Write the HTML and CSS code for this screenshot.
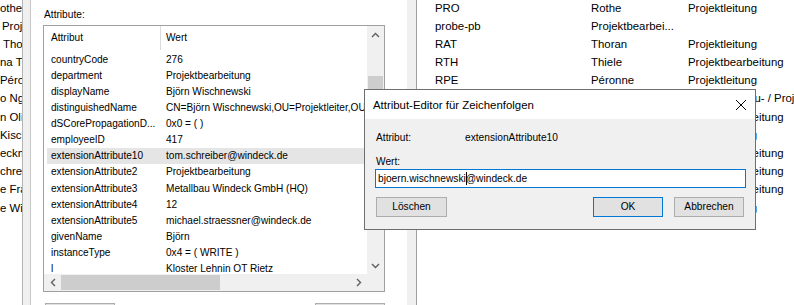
FILE: index.html
```html
<!DOCTYPE html>
<html lang="de">
<head>
<meta charset="utf-8">
<title>Attribut-Editor</title>
<link rel="stylesheet" href="styles.css">
</head>
<body>
<div class="app">
  <div class="leftlist">
    <div class="lwrap">
      <div class="lrow">othe</div>
      <div class="lrow ind2">Proje</div>
      <div class="lrow ind3">Thor</div>
      <div class="lrow">na Th</div>
      <div class="lrow">Péron</div>
      <div class="lrow">o Nga</div>
      <div class="lrow">n Oli</div>
      <div class="lrow">Kisch</div>
      <div class="lrow">eckm</div>
      <div class="lrow">chrei</div>
      <div class="lrow">e Fra</div>
      <div class="lrow">e Wi</div>
    </div>
  </div>
  <div class="split1"></div>
  <div class="middle">
    <div class="label">Attribute:</div>
    <div class="listbox">
      <div class="lv">
        <div class="lvhead">
          <div class="hc1">Attribut</div>
          <div class="hc2">Wert</div>
        </div>
        <div class="lvrows">
          <div class="lvrow"><div class="c1">countryCode</div><div class="c2">276</div></div>
          <div class="lvrow"><div class="c1">department</div><div class="c2">Projektbearbeitung</div></div>
          <div class="lvrow"><div class="c1">displayName</div><div class="c2">Björn Wischnewski</div></div>
          <div class="lvrow"><div class="c1">distinguishedName</div><div class="c2">CN=Björn Wischnewski,OU=Projektleiter,OU=Mitarbeiter</div></div>
          <div class="lvrow"><div class="c1">dSCorePropagationD...</div><div class="c2">0x0 = ( )</div></div>
          <div class="lvrow"><div class="c1">employeeID</div><div class="c2">417</div></div>
          <div class="lvrow sel"><div class="c1">extensionAttribute10</div><div class="c2">tom.schreiber@windeck.de</div></div>
          <div class="lvrow"><div class="c1">extensionAttribute2</div><div class="c2">Projektbearbeitung</div></div>
          <div class="lvrow"><div class="c1">extensionAttribute3</div><div class="c2">Metallbau Windeck GmbH (HQ)</div></div>
          <div class="lvrow"><div class="c1">extensionAttribute4</div><div class="c2">12</div></div>
          <div class="lvrow"><div class="c1">extensionAttribute5</div><div class="c2">michael.straessner@windeck.de</div></div>
          <div class="lvrow"><div class="c1">givenName</div><div class="c2">Björn</div></div>
          <div class="lvrow"><div class="c1">instanceType</div><div class="c2">0x4 = ( WRITE )</div></div>
          <div class="lvrow"><div class="c1">l</div><div class="c2">Kloster Lehnin OT Rietz</div></div>
        </div>
      </div>
      <div class="vscroll">
        <div class="arrow"><svg width="9" height="6" viewBox="0 0 9 6"><polyline points="1,5 4.5,1.5 8,5" fill="none" stroke="#606060" stroke-width="1.4"/></svg></div>
        <div class="vtrack"><div class="vthumb"></div></div>
        <div class="arrow"><svg width="9" height="6" viewBox="0 0 9 6"><polyline points="1,1 4.5,4.5 8,1" fill="none" stroke="#606060" stroke-width="1.4"/></svg></div>
      </div>
      <div class="hscroll">
        <div class="harrow"><svg width="6" height="9" viewBox="0 0 6 9"><polyline points="5,1 1.5,4.5 5,8" fill="none" stroke="#606060" stroke-width="1.4"/></svg></div>
        <div class="htrack"><div class="hthumb"></div></div>
        <div class="harrow"><svg width="6" height="9" viewBox="0 0 6 9"><polyline points="1,1 4.5,4.5 1,8" fill="none" stroke="#606060" stroke-width="1.4"/></svg></div>
      </div>
      <div class="corner"></div>
    </div>
    <div class="btnrow"><div class="pbtn"></div><div class="pbtn"></div></div>
  </div>
  <div class="split2"></div>
  <div class="right">
    <div class="rwrap">
      <div class="rrow"><div class="r1">PRO</div><div class="r2">Rothe</div><div class="r3">Projektleitung</div></div>
      <div class="rrow"><div class="r1">probe-pb</div><div class="r2">Projektbearbei...</div><div class="r3"></div></div>
      <div class="rrow"><div class="r1">RAT</div><div class="r2">Thoran</div><div class="r3">Projektleitung</div></div>
      <div class="rrow"><div class="r1">RTH</div><div class="r2">Thiele</div><div class="r3">Projektbearbeitung</div></div>
      <div class="rrow"><div class="r1">RPE</div><div class="r2">Péronne</div><div class="r3">Projektleitung</div></div>
      <div class="rrow"><div class="r1">RNG</div><div class="r2">Ngo</div><div class="r3">Technik &amp; Bau- / Projektleitung</div></div>
      <div class="rrow"><div class="r1">ROL</div><div class="r2">Olsen</div><div class="r3">Projektbearbeitung</div></div>
      <div class="rrow"><div class="r1">RKI</div><div class="r2">Kischel</div><div class="r3">Projektleitung</div></div>
      <div class="rrow"><div class="r1">RBE</div><div class="r2">Beckmann</div><div class="r3">Projektbearbeitung</div></div>
      <div class="rrow"><div class="r1">RSC</div><div class="r2">Schreiber</div><div class="r3">Projektbearbeitung</div></div>
      <div class="rrow"><div class="r1">RFR</div><div class="r2">Frank</div><div class="r3">Projektbearbeitung</div></div>
      <div class="rrow"><div class="r1">RWI</div><div class="r2">Wisch</div><div class="r3">Projektleitung</div></div>
    </div>
  </div>
</div>

<div class="dialog">
  <div class="dtitle">
    <span>Attribut-Editor für Zeichenfolgen</span>
    <svg class="close" width="10" height="10" viewBox="0 0 10 10"><line x1="0" y1="0" x2="10" y2="10" stroke="#000" stroke-width="1"/><line x1="10" y1="0" x2="0" y2="10" stroke="#000" stroke-width="1"/></svg>
  </div>
  <div class="dbody">
    <div class="drow"><div class="dk">Attribut:</div><div class="dv">extensionAttribute10</div></div>
    <div class="wlabel">Wert:</div>
    <div class="input">bjoern.wischnewski<span class="caret"></span>@windeck.de</div>
    <div class="dbtns">
      <div class="btn del">Löschen</div>
      <div class="btn ok">OK</div>
      <div class="btn cancel">Abbrechen</div>
    </div>
  </div>
</div>
</body>
</html>
```
FILE: styles.css
```css
* { box-sizing: border-box; }
html, body { margin: 0; padding: 0; }
body {
  width: 794px;
  height: 305px;
  overflow: hidden;
  position: relative;
  background: #fff;
  color: #000;
  font-family: "Liberation Sans", Arial, sans-serif;
}
.app { display: flex; height: 305px; overflow: hidden; }

/* left strip list */
.leftlist { width: 22px; overflow: hidden; font-size: 11.4px; background: #fff; }
.lwrap { margin-top: -1.5px; }
.lrow { height: 18.2px; line-height: 18.2px; white-space: nowrap; }
.ind2 { padding-left: 2px; }
.ind3 { padding-left: 3px; }

.split1 {
  width: 9px;
  background: #f0f0f0;
  border-left: 1px solid #b4b4b4;
  border-right: 1px solid #c8c8c8;
}

/* middle panel */
.middle { width: 376px; padding-left: 12px; background: #fff; }
.label { font-size: 10.2px; line-height: 12px; padding-top: 9px; height: 25px; margin-left: 1px; }
.listbox {
  width: 342px;
  height: 267px;
  border: 1px solid #a0a0a0;
  display: grid;
  grid-template-columns: 1fr 17px;
  grid-template-rows: 1fr 17px;
  background: #fff;
}
.lv { overflow: hidden; font-size: 10.1px; }
.lvhead { height: 24px; display: flex; }
.hc1 { width: 117px; padding-left: 7px; line-height: 24px; border-right: 1px solid #dcdcdc; }
.hc2 { padding-left: 5px; line-height: 24px; }
.lvrows { margin-top: 1.5px; }
.lvrow { display: flex; height: 16.15px; line-height: 16.15px; margin-left: 3px; white-space: nowrap; }
.c1 { width: 113px; flex: none; padding-left: 4px; }
.c2 { padding-left: 6px; flex: 1; }
.sel { background: #e5e5e5; }

.vscroll { background: #f0f0f0; display: flex; flex-direction: column; }
.arrow { height: 17px; display: flex; align-items: center; justify-content: center; }
.vtrack { flex: 1; padding: 33px 1px 0 1px; }
.vthumb { height: 60px; background: #cdcdcd; }
.hscroll { background: #f0f0f0; display: flex; }
.harrow { width: 17px; display: flex; align-items: center; justify-content: center; }
.htrack { flex: 1; padding: 1px 0; }
.hthumb { width: 159px; height: 100%; background: #cdcdcd; }
.corner { background: #f0f0f0; }

.btnrow { display: flex; justify-content: space-between; width: 342px; margin-top: 11px; padding-left: 2px; }
.pbtn { width: 70px; height: 22px; background: #e1e1e1; border: 1px solid #adadad; }

.split2 { width: 10px; background: #f0f0f0; border-right: 1px solid #a0a0a0; }

/* right panel */
.right { flex: 1; overflow: hidden; font-size: 11.4px; padding-left: 18px; background: #fff; }
.rwrap { margin-top: -1.5px; }
.rrow { display: flex; height: 18.2px; line-height: 18.2px; white-space: nowrap; }
.r1 { width: 156px; flex: none; }
.r2 { width: 97px; flex: none; }
.r3 { flex: none; }

/* dialog */
.dialog {
  position: absolute;
  left: 364px;
  top: 89px;
  width: 392px;
  height: 141px;
  border: 1px solid #6e6e6e;
  background: #f0f0f0;
}
.dtitle {
  height: 29px;
  background: #fff;
  display: flex;
  align-items: center;
  justify-content: space-between;
  padding: 0 9px 0 8px;
  font-size: 11.4px;
}
.close { display: block; }
.dbody { padding: 12px 11px 0 10px; font-size: 10.2px; }
.drow { display: flex; line-height: 13px; padding-left: 1px; }
.dk { width: 89px; }
.wlabel { margin-top: 11px; line-height: 13px; padding-left: 1px; }
.input {
  margin-top: 1px;
  width: 371px;
  height: 19px;
  border: 1px solid #0078d7;
  background: #fff;
  padding-left: 2px;
  line-height: 17px;
  white-space: nowrap;
}
.caret { display: inline-block; width: 1px; height: 13px; background: #000; vertical-align: -3px; margin-right: -1px; }
.dbtns { display: flex; margin-top: 9px; }
.btn {
  width: 70px;
  height: 20px;
  border: 1px solid #adadad;
  background: #e1e1e1;
  text-align: center;
  line-height: 18px;
}
.btn.del { width: 71px; margin-left: 1px; }
.btn.ok { margin-left: auto; border-color: #0078d7; }
.btn.cancel { margin-left: 11px; }
```
